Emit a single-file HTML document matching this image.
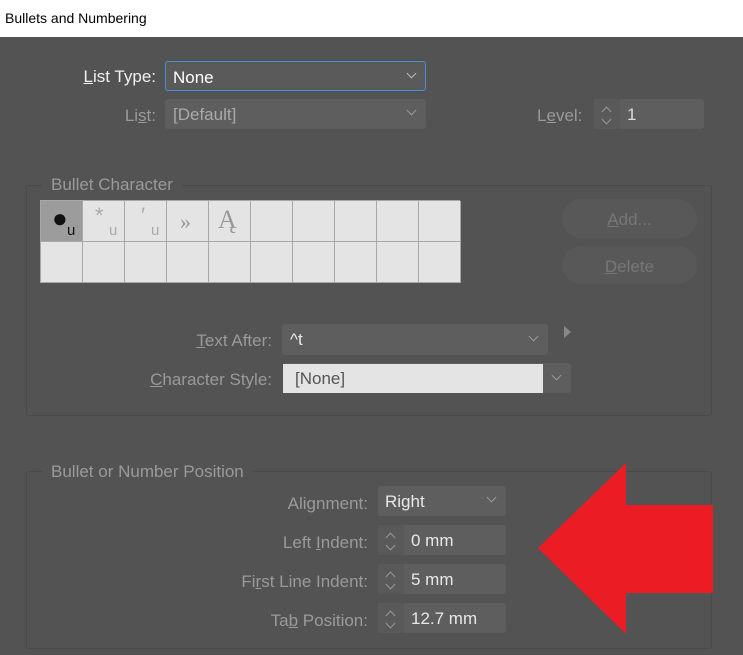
<!DOCTYPE html><html><head><style>
*{margin:0;padding:0;box-sizing:border-box}
body{width:743px;height:655px;background:#535353;font-family:"Liberation Sans",sans-serif;position:relative;overflow:hidden}
.a{position:absolute}
.t{font-size:17px;color:#9a9a9a;white-space:nowrap}
.r{text-align:right}
.f{background:#5e5e5e;border-radius:3px}
.v{font-size:17px;color:#e8e8e8;position:absolute;top:6px}
.chev{position:absolute;width:7px;height:7px;border-right:1px solid #bbb;border-bottom:1px solid #bbb;transform:rotate(45deg)}
.grp{border:1px solid #4a4a4a;border-radius:3px}
.cell{position:absolute;width:42px;height:41px;border-right:1px solid #a8a8a8;border-bottom:1px solid #a8a8a8;background:#e4e4e4}
.sp{position:absolute;left:0;top:0;width:26px;height:100%;background:#595959}
.sp:before{content:"";position:absolute;left:9px;top:9px;width:6px;height:6px;border-left:1px solid #999;border-top:1px solid #999;transform:rotate(45deg)}
.sp:after{content:"";position:absolute;left:9px;top:17px;width:6px;height:6px;border-right:1px solid #999;border-bottom:1px solid #999;transform:rotate(45deg)}
u{text-decoration:underline}
</style></head><body>
<div class="a" style="left:0;top:0;width:743px;height:37px;background:#fff"></div>
<div class="a" style="left:5px;top:10px;font-size:14px;color:#000">Bullets and Numbering</div>

<div class="a t r" style="left:60px;top:67px;width:96px;color:#f0f0f0"><u>L</u>ist Type:</div>
<div class="a f" style="left:165px;top:61px;width:261px;height:30px;border:1px solid #4a8fd6;background:#5a5a5a"><span class="v" style="left:7px;color:#fff">None</span><div class="chev" style="left:242px;top:8px"></div></div>
<div class="a t r" style="left:60px;top:106px;width:96px">Li<u>s</u>t:</div>
<div class="a f" style="left:165px;top:99px;width:261px;height:30px"><span class="v" style="left:8px;color:#aaa">[Default]</span><div class="chev" style="left:243px;top:8px;border-color:#999"></div></div>
<div class="a t" style="left:537px;top:106px">L<u>e</u>vel:</div>
<div class="a f" style="left:594px;top:99px;width:110px;height:30px"><div class="sp"></div><span class="v" style="left:33px;top:6px;color:#ddd">1</span></div>

<div class="a grp" style="left:26px;top:185px;width:686px;height:231px"></div>
<div class="a t" style="left:42px;top:175px;background:#535353;padding:0 9px">Bullet Character</div>
<div class="a" style="left:40px;top:200px;width:420px;height:83px;border-left:1px solid #a8a8a8;border-top:1px solid #a8a8a8">
<div class="cell" style="left:0;top:0;background:#9c9c9c"><span class="a" style="left:11px;top:2px;font-size:26px;color:#111">●</span><span class="a" style="left:26px;top:21px;font-size:15px;color:#111">u</span></div>
<div class="cell" style="left:42px;top:0"><span class="a" style="left:12px;top:2px;font-size:22px;color:#aaa">*</span><span class="a" style="left:26px;top:21px;font-size:15px;color:#aaa">u</span></div>
<div class="cell" style="left:84px;top:0"><span class="a" style="left:16px;top:2px;font-size:22px;color:#aaa">′</span><span class="a" style="left:26px;top:21px;font-size:15px;color:#aaa">u</span></div>
<div class="cell" style="left:126px;top:0"><span class="a" style="left:13px;top:8px;font-size:22px;color:#999;font-family:'Liberation Serif',serif">»</span></div>
<div class="cell" style="left:168px;top:0"><span class="a" style="left:9px;top:4px;font-size:26px;color:#999;font-family:'Liberation Serif',serif">Ą</span></div>
<div class="cell" style="left:210px;top:0"></div><div class="cell" style="left:252px;top:0"></div><div class="cell" style="left:294px;top:0"></div><div class="cell" style="left:336px;top:0"></div><div class="cell" style="left:378px;top:0"></div>
<div class="cell" style="left:0;top:41px"></div><div class="cell" style="left:42px;top:41px"></div><div class="cell" style="left:84px;top:41px"></div><div class="cell" style="left:126px;top:41px"></div><div class="cell" style="left:168px;top:41px"></div><div class="cell" style="left:210px;top:41px"></div><div class="cell" style="left:252px;top:41px"></div><div class="cell" style="left:294px;top:41px"></div><div class="cell" style="left:336px;top:41px"></div><div class="cell" style="left:378px;top:41px"></div>
</div>
<div class="a" style="left:562px;top:199px;width:135px;height:39px;border-radius:20px;background:#585858"><div class="t" style="text-align:center;line-height:41px;color:#777"><u>A</u>dd...</div></div>
<div class="a" style="left:562px;top:246px;width:135px;height:38px;border-radius:20px;background:#585858"><div class="t" style="text-align:center;line-height:41px;color:#777"><u>D</u>elete</div></div>

<div class="a t r" style="left:100px;top:331px;width:172px"><u>T</u>ext After:</div>
<div class="a f" style="left:282px;top:324px;width:266px;height:31px"><span class="v" style="left:8px">^t</span><div class="chev" style="left:248px;top:9px;border-color:#999"></div></div>
<div class="a" style="left:564px;top:326px;width:0;height:0;border-left:7px solid #888;border-top:6px solid transparent;border-bottom:6px solid transparent"></div>
<div class="a t r" style="left:100px;top:370px;width:172px"><u>C</u>haracter Style:</div>
<div class="a f" style="left:283px;top:363px;width:288px;height:30px"></div>
<div class="a" style="left:283px;top:364px;width:260px;height:29px;background:#e4e4e4"><span class="a" style="left:12px;top:5px;font-size:17px;color:#555">[None]</span></div>
<div class="chev" style="left:553px;top:372px;border-color:#999"></div>

<div class="a grp" style="left:26px;top:471px;width:686px;height:178px"></div>
<div class="a t" style="left:42px;top:462px;background:#535353;padding:0 9px">Bullet or Number Position</div>
<div class="a t r" style="left:150px;top:494px;width:218px">Ali<u>g</u>nment:</div>
<div class="a f" style="left:378px;top:486px;width:128px;height:30px"><span class="v" style="left:7px">Right</span><div class="chev" style="left:110px;top:8px;border-color:#999"></div></div>
<div class="a t r" style="left:150px;top:533px;width:218px">Left <u>I</u>ndent:</div>
<div class="a f" style="left:378px;top:525px;width:128px;height:30px"><div class="sp"></div><span class="v" style="left:33px">0 mm</span></div>
<div class="a t r" style="left:150px;top:572px;width:218px">Fi<u>r</u>st Line Indent:</div>
<div class="a f" style="left:378px;top:564px;width:128px;height:30px"><div class="sp"></div><span class="v" style="left:33px">5 mm</span></div>
<div class="a t r" style="left:150px;top:611px;width:218px">Ta<u>b</u> Position:</div>
<div class="a f" style="left:378px;top:603px;width:128px;height:30px"><div class="sp"></div><span class="v" style="left:33px">12.7 mm</span></div>

<svg class="a" style="left:0;top:0" width="743" height="655"><polygon points="538,548 626,463 626,505 713,505 713,593 626,593 626,634" fill="#ec1c24"/></svg>
</body></html>
